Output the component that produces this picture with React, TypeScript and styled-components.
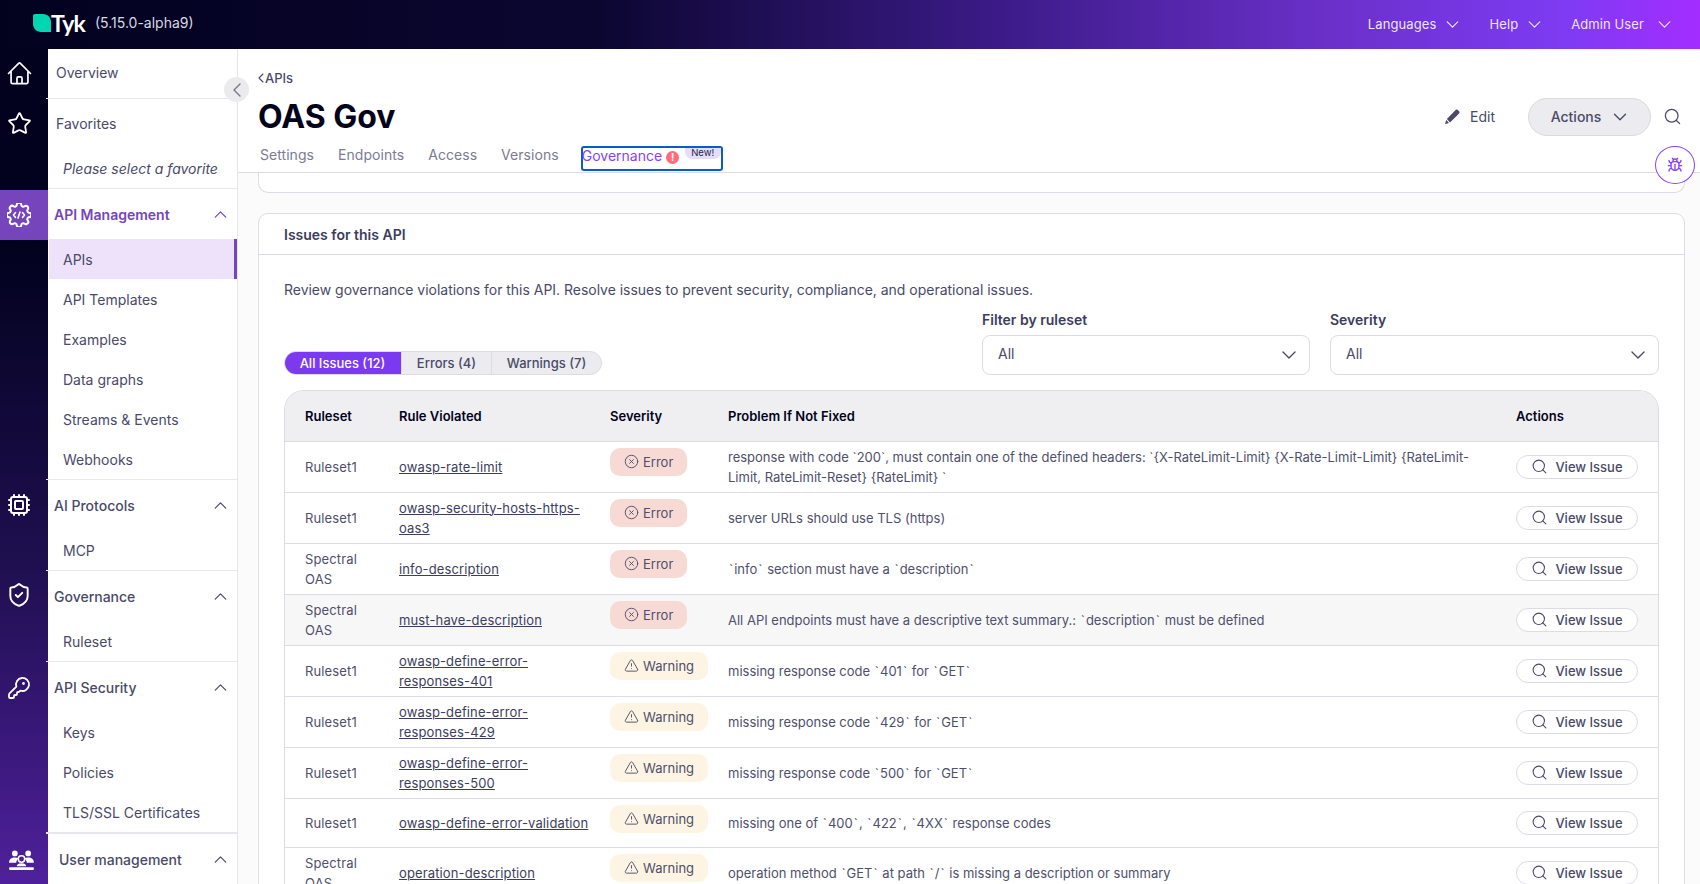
import React from "react";
import styled, { createGlobalStyle } from "styled-components";
import { Star, Cpu, ShieldCheck, KeyRound, ChevronDown, ChevronUp, ChevronLeft, Search, Bug, CircleX, TriangleAlert } from "lucide-react";

const Global = createGlobalStyle`
  html, body { margin: 0; padding: 0; height: 100%; overflow: hidden; }
  body { font-family: Inter, "Noto Sans", sans-serif; font-size: 14px; color: #4a4a68; background: #fff; }
  * { box-sizing: border-box; }
`;

const Page = styled.div`
  width: 1700px; height: 884px; display: flex; flex-direction: column; overflow: hidden; position: relative;
`;
const TopBar = styled.header`
  height: 49px; flex: none; display: flex; align-items: center; padding-left: 33px; color: #e6e2f7;
  background: linear-gradient(90deg, #02021f 0%, #0b0630 35%, #3a1a85 58%, #6a30c9 78%, #7e3bf3 92%, #a32dff 100%);
`;
const LogoWrap = styled.div` display: flex; align-items: center; width: 62px; margin-top: -4px; `;
const LogoText = styled.span` font-family: Lato, Inter, sans-serif; font-weight: 700; font-size: 23px; color: #fff; margin-left: 0; letter-spacing: -0.7px; line-height: 24px; `;
const Version = styled.span` font-size: 14px; color: #d8d8e4; margin-top: -4px; `;
const TopNav = styled.nav` margin-left: auto; display: flex; align-items: center; `;
const TopLink = styled.div<{ $gap: number }>`
  display: flex; align-items: center; gap: ${p => p.$gap}px; font-size: 13px; letter-spacing: 0.1px; margin-right: 26px; color: #ece6fc; margin-top: -1px;
  &:last-child { margin-right: 25px; }
`;
const Body = styled.div` flex: 1; display: flex; min-height: 0; `;
const Rail = styled.aside`
  width: 48px; flex: none; display: flex; flex-direction: column; color: #fff;
  background: linear-gradient(180deg, #02021f 0%, #02021f 24%, #1f0f50 62%, #4f209c 100%);
`;
const RailItem = styled.div<{ $mt?: number; $active?: boolean; $pr?: number }>`
  height: 50px; flex: none; display: flex; align-items: center; justify-content: center; margin-top: ${p => p.$mt ?? 0}px; padding-right: ${p => p.$pr ?? 10}px;
  background: ${p => (p.$active ? "#7644bb" : "transparent")};
`;
const Side = styled.nav`
  width: 190px; flex: none; background: #fff; border-right: 1px solid #e6e6ea; position: relative; color: #4a4a68; font-size: 14px;
`;
const Overview = styled.div` height: 50px; display: flex; align-items: center; border-bottom: 1px solid #e8e8ec; margin-left: -2px; padding: 0 0 2px 10px; position: relative; `;
const Fav = styled.div` height: 49px; display: flex; align-items: center; padding-left: 8px; `;
const FavHint = styled.div` height: 41px; display: flex; align-items: center; padding-left: 15px; font-style: italic; font-size: 14px; border-bottom: 1px solid #e8e8ec; `;
const Group = styled.section<{ $thick?: boolean }>`
  border-bottom: ${p => (p.$thick ? "2px" : "1px")} solid #e8e8ec;
  margin-left: -2px; padding-left: 2px; position: relative;
  &:last-of-type { border-bottom: none; }
`;
const GroupHead = styled.div<{ $active?: boolean; $indent: number }>`
  height: 50px; display: flex; align-items: center; justify-content: space-between; padding: 0 6px 0 ${p => p.$indent}px;
  color: ${p => (p.$active ? "#7644bb" : "#4a4a68")}; font-weight: ${p => (p.$active ? 600 : 500)};
`;
const Item = styled.div<{ $active?: boolean }>`
  height: 40px; display: flex; align-items: center; padding-left: ${p => (p.$active ? 14 : 15)}px;
  margin-left: ${p => (p.$active ? 1 : 0)}px;
  background: ${p => (p.$active ? "#eee2fb" : "transparent")};
  border-right: ${p => (p.$active ? "3px solid #7644bb" : "none")};
`;
const Collapse = styled.button`
  position: absolute; top: 28px; left: 176px; width: 25px; height: 25px; border-radius: 50%; border: none; background: #ebebee; color: #77778c; display: flex; align-items: center; justify-content: center; padding: 0; z-index: 3;
`;
const Main = styled.main` flex: 1; min-width: 0; display: flex; flex-direction: column; background: #fbfbfc; `;
const MainHead = styled.div`
  height: 124px; flex: none; background: #fff; border-bottom: 1px solid #dcdce4; padding: 21px 0 0 20px; position: relative;
`;
const Back = styled.div` display: flex; align-items: center; font-weight: 500; font-size: 13px; color: #4a4a68; height: 16px; `;
const BackIcon = styled(ChevronLeft)` margin: 0 -4px 0 -5px; `;
const TitleRow = styled.div` display: flex; align-items: center; margin-top: 9px; height: 44px; `;
const Title = styled.h1` margin: 0; font-size: 32px; font-weight: 700; color: #03031c; line-height: 44px; `;
const HeadActions = styled.div` margin-left: auto; display: flex; align-items: center; margin-top: -1px; `;
const Edit = styled.div` display: flex; align-items: center; gap: 10px; font-size: 14px; color: #4a4a68; margin-right: 33px; `;
const ActionsBtn = styled.div`
  width: 123px; height: 38px; border-radius: 19px; background: #ebebf0; border: 1px solid #d9d9e0; display: flex; align-items: center; justify-content: center; gap: 8px; padding-left: 3px; color: #4a4a68; font-size: 14px; font-weight: 500; margin-right: 14px;
`;
const SearchBox = styled.div` width: 37px; margin-left: -2px; display: flex; color: #4a4a68; `;
const Tabs = styled.div` display: flex; align-items: flex-start; gap: 24px; margin: 1px 0 0 2px; height: 28px; `;
const Tab = styled.div` font-size: 14px; letter-spacing: 0.05px; color: #7b7b95; margin-top: 6px; `;
const GovTab = styled.div`
  width: 142px; height: 25px; border: 2px solid #0a5cc8; border-radius: 3px; display: flex; align-items: center; position: relative; color: #8a3ffc; font-size: 14px; margin: 6px 0 0 -2px; padding-bottom: 6px; text-indent: -1px;
`;
const Alert = styled.span`
  width: 13px; height: 13px; border-radius: 50%; background: #ff6b7a; color: #fff; font-size: 10px; font-weight: 700; display: flex; align-items: center; justify-content: center; margin: 3px 0 0 4px; text-indent: 0;
`;
const NewPill = styled.span`
  position: absolute; top: 0; right: 0; width: 36px; height: 11px; background: #e6ddfb; border-radius: 0 0 7px 7px; color: #26263f; font-size: 9.5px; text-align: center; line-height: 9px; text-indent: 0;
`;
const BugBtn = styled.div`
  position: absolute; left: 1655px; top: 146px; width: 40px; height: 38px; border-radius: 50%; border: 1px solid #8a3ffc; background: #fff; color: #8a3ffc; display: flex; align-items: center; justify-content: center; z-index: 4;
`;
const Scroll = styled.div` flex: 1; min-height: 0; overflow: hidden; padding: 0 15px 0 20px; `;
const CardEnd = styled.div` height: 20px; background: #fff; border: 1px solid #dcdce4; border-top: none; border-radius: 0 0 10px 10px; `;
const Card = styled.section` margin-top: 20px; background: #fff; border: 1px solid #dcdce4; border-radius: 10px; `;
const CardHead = styled.div` height: 41px; display: flex; align-items: center; padding-left: 25px; font-weight: 600; font-size: 14px; color: #3d3d5c; border-bottom: 1px solid #dcdce4; `;
const CardBody = styled.div` padding: 25px 25px 0 25px; `;
const Intro = styled.p` margin: 0; line-height: 20px; font-size: 14px; color: #4a4a68; letter-spacing: -0.02px; `;
const FilterRow = styled.div` display: flex; align-items: flex-end; margin-top: 11px; `;
const Seg = styled.div` display: flex; height: 24px; border-radius: 12px; border: 1px solid #dcdce4; background: #ebebf0; overflow: hidden; `;
const SegBtn = styled.div<{ $on?: boolean; $w: number }>`
  width: ${p => p.$w}px; display: flex; align-items: center; justify-content: center; font-size: 13px; font-weight: 500;
  color: ${p => (p.$on ? "#fff" : "#4a4a68")}; background: ${p => (p.$on ? "#7b39f0" : "transparent")};
  margin: ${p => (p.$on ? "-1px 0 -1px -1px" : "0")};
  & + & { border-left: 1px solid #dcdce4; }
`;
const Filters = styled.div` margin-left: auto; display: flex; gap: 20px; `;
const Filter = styled.label<{ $w: number }>` width: ${p => p.$w}px; display: block; `;
const FilterLabel = styled.div` font-weight: 600; font-size: 14px; color: #3d3d5c; height: 18px; line-height: 18px; margin-bottom: 6px; `;
const Select = styled.div` height: 40px; border: 1px solid #dcdce4; border-radius: 8px; display: flex; align-items: center; justify-content: space-between; padding: 0 8px 0 15px; color: #4a4a68; font-size: 14px; background: #fff; `;
const SelectValue = styled.span` margin-top: -3px; `;
const TableWrap = styled.div` margin-top: 15px; border: 1px solid #dcdce4; border-radius: 20px 20px 0 0; border-bottom: none; overflow: hidden; `;
const Table = styled.table` width: 100%; border-collapse: collapse; table-layout: fixed; `;
const Th = styled.th` height: 50px; background: #efeff2; text-align: left; font-weight: 600; font-size: 13px; color: #03031c; padding: 1px 0 0 20px; border-bottom: 1px solid #dcdce4; `;
const Tr = styled.tr<{ $hover?: boolean; $h: number }>` height: ${p => p.$h}px; background: ${p => (p.$hover ? "#f7f7f8" : "#fff")}; `;
const Td = styled.td` padding: 0 0 0 20px; border-bottom: 1px solid #dcdce4; font-size: 13px; line-height: 20px; color: #4f4f6c; vertical-align: middle; `;
const RulesetCell = styled(Td)` letter-spacing: 0.13px; `;
const RuleLink = styled.a` color: #3d3d5c; text-decoration: underline; letter-spacing: 0.13px; `;
const Tick = styled.span` margin: 0 1px; `;
const BadgeCell = styled(Td)` vertical-align: top; padding-top: 6px; `;
const Badge = styled.div<{ $kind: "error" | "warning" }>`
  height: 28px; border-radius: 10px; display: inline-flex; align-items: center; gap: 4px; padding: 0 14px 0 14px; font-size: 13px; color: #4f4f6c;
  background: ${p => (p.$kind === "error" ? "#f8dad5" : "#fdf4e3")};
`;
const ViewBtn = styled.div` width: 122px; height: 24px; border: 1px solid #dcdce4; border-radius: 12px; display: flex; align-items: center; justify-content: center; gap: 7px; font-size: 13px; font-weight: 500; color: #4a4a68; background: #fff; `;

const HomeIcon = () => (
  <svg width="27" height="27" viewBox="0 0 24 24" fill="none" stroke="#fff" strokeWidth="1.5" strokeLinecap="round" strokeLinejoin="round">
    <path d="M2.25 12l8.954-8.955c.44-.439 1.152-.439 1.591 0L21.75 12M4.5 9.75v10.125c0 .621.504 1.125 1.125 1.125H9.75v-4.875c0-.621.504-1.125 1.125-1.125h2.25c.621 0 1.125.504 1.125 1.125V21h4.125c.621 0 1.125-.504 1.125-1.125V9.75M8.25 21h8.25" />
  </svg>
);
const GearCode = () => (
  <svg width="24" height="24" viewBox="0 0 24 24" fill="none" stroke="#fff" strokeWidth="2" strokeLinecap="round" strokeLinejoin="round">
    <path d="M9.67 2.2a2 2 0 0 1 4.66 0 2 2 0 0 0 3 1.24 2 2 0 0 1 3.23 3.23 2 2 0 0 0 1.24 3 2 2 0 0 1 0 4.66 2 2 0 0 0-1.24 3 2 2 0 0 1-3.23 3.23 2 2 0 0 0-3 1.24 2 2 0 0 1-4.66 0 2 2 0 0 0-3-1.24 2 2 0 0 1-3.23-3.23 2 2 0 0 0-1.24-3 2 2 0 0 1 0-4.66 2 2 0 0 0 1.24-3 2 2 0 0 1 3.23-3.23 2 2 0 0 0 3-1.24Z" />
    <path d="M8.5 9.5 6.5 12l2 2.5M15.5 9.5l2 2.5-2 2.5M13 9l-2 6" strokeWidth="1.6" />
  </svg>
);
const Team = () => (
  <svg width="25" height="20" viewBox="0 0 26 21" fill="#fff">
    <circle cx="6" cy="3.6" r="3" />
    <circle cx="20" cy="3.6" r="3" />
    <path d="M0 13.5C0 9.5 2.5 8 6 8c1.6 0 3 .3 4 1-1.5 1-2.4 2.6-2.6 4.5H0ZM26 13.5C26 9.5 23.5 8 20 8c-1.6 0-3 .3-4 1 1.5 1 2.4 2.6 2.6 4.5H26Z" />
    <circle cx="13" cy="9.5" r="3.4" fill="none" stroke="#fff" strokeWidth="1.6" />
    <path d="M8 17c0-2 2.2-3.2 5-3.2s5 1.2 5 3.2H8ZM1 18h24c.6 0 1 .4 1 1v1c0 .6-.4 1-1 1H1c-.6 0-1-.4-1-1v-1c0-.6.4-1 1-1Z" />
  </svg>
);
const PencilIcon = () => (
  <svg width="15" height="15" viewBox="0 0 15 15" fill="#4a4a68">
    <path d="M10.6.9c.6-.6 1.5-.6 2.1 0l1.4 1.4c.6.6.6 1.5 0 2.1L5 13.4 1.9 10 10.6.9ZM1.3 11l2.7 3-3.4.9c-.3.1-.5-.2-.5-.4L1.3 11Z" />
  </svg>
);

type Row = { ruleset: string; rule: string; kind: "error" | "warning"; problem: string; h?: number; hover?: boolean; wraps?: boolean };
const rows: Row[] = [
  { ruleset: "Ruleset1", rule: "owasp-rate-limit", kind: "error", wraps: true, problem: "response with code `200`, must contain one of the defined headers: `{X-RateLimit-Limit} {X-Rate-Limit-Limit} {RateLimit-Limit, RateLimit-Reset} {RateLimit} `" },
  { ruleset: "Ruleset1", rule: "owasp-security-hosts-https-oas3", kind: "error", problem: "server URLs should use TLS (https)" },
  { ruleset: "Spectral OAS", rule: "info-description", kind: "error", problem: "`info` section must have a `description`" },
  { ruleset: "Spectral OAS", rule: "must-have-description", kind: "error", problem: "All API endpoints must have a descriptive text summary.: `description` must be defined", hover: true },
  { ruleset: "Ruleset1", rule: "owasp-define-error-responses-401", kind: "warning", problem: "missing response code `401` for `GET`" },
  { ruleset: "Ruleset1", rule: "owasp-define-error-responses-429", kind: "warning", problem: "missing response code `429` for `GET`" },
  { ruleset: "Ruleset1", rule: "owasp-define-error-responses-500", kind: "warning", problem: "missing response code `500` for `GET`" },
  { ruleset: "Ruleset1", rule: "owasp-define-error-validation", kind: "warning", problem: "missing one of `400`, `422`, `4XX` response codes", h: 49 },
  { ruleset: "Spectral OAS", rule: "operation-description", kind: "warning", problem: "operation method `GET` at path `/` is missing a description or summary" },
];

const groups: { title: string; items: string[]; active?: boolean; thick?: boolean; indent?: number }[] = [
  { title: "API Management", active: true, items: ["APIs", "API Templates", "Examples", "Data graphs", "Streams & Events", "Webhooks"] },
  { title: "AI Protocols", items: ["MCP"] },
  { title: "Governance", items: ["Ruleset"] },
  { title: "API Security", thick: true, items: ["Keys", "Policies", "TLS/SSL Certificates"] },
  { title: "User management", indent: 11, items: [] },
];

const withTicks = (text: string) =>
  text.split("`").map((part, i, all) => (
    <React.Fragment key={i}>
      {part}
      {i < all.length - 1 && <Tick>`</Tick>}
    </React.Fragment>
  ));

export default function App() {
  return (
    <Page>
      <Global />
      <TopBar>
        <LogoWrap>
          <svg width="18" height="18" viewBox="0 0 18 18"><path d="M2 0h8c4.4 0 8 3.6 8 8v10H8c-4.4 0-8-3.6-8-8V2c0-1.1.9-2 2-2Z" fill="#00d6b1" /></svg>
          <LogoText>Tyk</LogoText>
        </LogoWrap>
        <Version>(5.15.0-alpha9)</Version>
        <TopNav>
          <TopLink $gap={6}>Languages <ChevronDown size={21} strokeWidth={1.4} /></TopLink>
          <TopLink $gap={6}>Help <ChevronDown size={21} strokeWidth={1.4} /></TopLink>
          <TopLink $gap={10}>Admin User <ChevronDown size={21} strokeWidth={1.4} /></TopLink>
        </TopNav>
      </TopBar>
      <Body>
        <Rail>
          <RailItem $mt={-1}><HomeIcon /></RailItem>
          <RailItem><Star size={25} strokeWidth={1.7} /></RailItem>
          <RailItem $mt={42} $active><GearCode /></RailItem>
          <RailItem $mt={240}><Cpu size={24} strokeWidth={2} /></RailItem>
          <RailItem $mt={40}><ShieldCheck size={26} strokeWidth={1.8} /></RailItem>
          <RailItem $mt={43}><KeyRound size={24} strokeWidth={1.8} /></RailItem>
          <RailItem $mt={122} $pr={5}><Team /></RailItem>
        </Rail>
        <Side>
          <Overview>Overview</Overview>
          <Fav>Favorites</Fav>
          <FavHint>Please select a favorite</FavHint>
          {groups.map(g => (
            <Group key={g.title} $thick={g.thick}>
              <GroupHead $active={g.active} $indent={g.indent ?? 6}>
                {g.title}
                <ChevronUp size={21} strokeWidth={1.4} color={g.active ? "#7644bb" : "#4a4a68"} />
              </GroupHead>
              {g.items.map(i => (
                <Item key={i} $active={g.active && i === "APIs"}>{i}</Item>
              ))}
            </Group>
          ))}
          <Collapse><ChevronLeft size={24} strokeWidth={1.4} /></Collapse>
        </Side>
        <Main>
          <MainHead>
            <Back><BackIcon size={16} strokeWidth={1.6} />APIs</Back>
            <TitleRow>
              <Title>OAS Gov</Title>
              <HeadActions>
                <Edit><PencilIcon />Edit</Edit>
                <ActionsBtn>Actions <ChevronDown size={22} strokeWidth={1.5} /></ActionsBtn>
                <SearchBox><Search size={19} strokeWidth={1.6} /></SearchBox>
              </HeadActions>
            </TitleRow>
            <Tabs>
              <Tab>Settings</Tab>
              <Tab>Endpoints</Tab>
              <Tab>Access</Tab>
              <Tab>Versions</Tab>
              <GovTab>Governance<Alert>!</Alert><NewPill>New!</NewPill></GovTab>
            </Tabs>
          </MainHead>
          <Scroll>
            <CardEnd />
            <Card>
              <CardHead>Issues for this API</CardHead>
              <CardBody>
                <Intro>Review governance violations for this API. Resolve issues to prevent security, compliance, and operational issues.</Intro>
                <FilterRow>
                  <Seg>
                    <SegBtn $on $w={117}>All Issues (12)</SegBtn>
                    <SegBtn $w={90}>Errors (4)</SegBtn>
                    <SegBtn $w={110}>Warnings (7)</SegBtn>
                  </Seg>
                  <Filters>
                    <Filter $w={328}>
                      <FilterLabel>Filter by ruleset</FilterLabel>
                      <Select><SelectValue>All</SelectValue> <ChevronDown size={24} strokeWidth={1.4} /></Select>
                    </Filter>
                    <Filter $w={329}>
                      <FilterLabel>Severity</FilterLabel>
                      <Select><SelectValue>All</SelectValue> <ChevronDown size={24} strokeWidth={1.4} /></Select>
                    </Filter>
                  </Filters>
                </FilterRow>
                <TableWrap>
                  <Table>
                    <colgroup>
                      <col style={{ width: 94 }} />
                      <col style={{ width: 211 }} />
                      <col style={{ width: 118 }} />
                      <col style={{ width: 788 }} />
                      <col style={{ width: 163 }} />
                    </colgroup>
                    <thead>
                      <tr>
                        <Th>Ruleset</Th>
                        <Th>Rule Violated</Th>
                        <Th>Severity</Th>
                        <Th>Problem If Not Fixed</Th>
                        <Th>Actions</Th>
                      </tr>
                    </thead>
                    <tbody>
                      {rows.map(r => (
                        <Tr key={r.rule} $h={r.h ?? 51} $hover={r.hover}>
                          <RulesetCell>{r.ruleset}</RulesetCell>
                          <Td><RuleLink>{r.rule}</RuleLink></Td>
                          <BadgeCell>
                            <Badge $kind={r.kind}>
                              {r.kind === "error" ? <CircleX size={15} strokeWidth={1.5} /> : <TriangleAlert size={15} strokeWidth={1.5} />}
                              {r.kind === "error" ? "Error" : "Warning"}
                            </Badge>
                          </BadgeCell>
                          <Td>{r.wraps ? r.problem : withTicks(r.problem)}</Td>
                          <Td><ViewBtn><Search size={17} strokeWidth={1.5} />View Issue</ViewBtn></Td>
                        </Tr>
                      ))}
                    </tbody>
                  </Table>
                </TableWrap>
              </CardBody>
            </Card>
          </Scroll>
        </Main>
      </Body>
      <BugBtn><Bug size={16} strokeWidth={2} /></BugBtn>
    </Page>
  );
}
